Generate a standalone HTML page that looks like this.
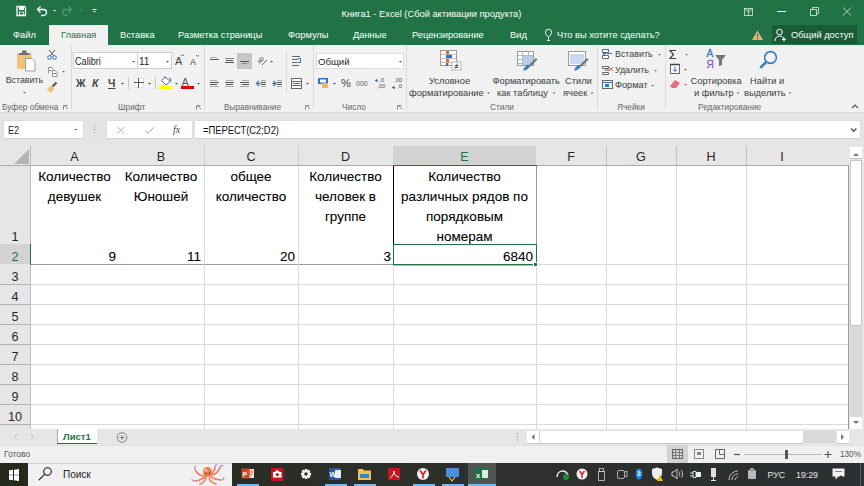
<!DOCTYPE html>
<html><head><meta charset="utf-8">
<style>
*{margin:0;padding:0;box-sizing:border-box}
html,body{width:864px;height:486px;overflow:hidden;background:#fff}
body{position:relative;font-family:"Liberation Sans",sans-serif;color:#000}
.a{position:absolute}
.t{position:absolute;white-space:nowrap;line-height:1}
svg{position:absolute;overflow:visible}
/* title */
#title{left:0;top:0;width:864px;height:45px;background:#217346}
.tab{position:absolute;top:31px;font-size:9.3px;color:#fff;white-space:nowrap;line-height:1}
#ribbon{left:0;top:45px;width:864px;height:67px;background:#f1f1f1}
.rl{position:absolute;font-size:9.3px;color:#3c3c3c;white-space:nowrap;line-height:1}
.gl{position:absolute;top:103px;font-size:8.3px;color:#666;white-space:nowrap;line-height:1}
.sep{position:absolute;top:47px;width:1px;height:63px;background:#dadada}
#band{left:0;top:112px;width:864px;height:34px;background:#e4e4e4}
.box{position:absolute;background:#fff;border-bottom:1px solid #cfcfcf;box-shadow:0 -1px 0 #dcdcdc,1px 0 0 #dcdcdc,-1px 0 0 #dcdcdc}
/* grid */
.hdr{position:absolute;top:146px;height:19px;background:#e6e6e6}
.ch{position:absolute;top:151px;font-size:12.6px;color:#262626;line-height:1;text-align:center}
.rh{position:absolute;left:0;width:30px;font-size:12.6px;color:#262626;line-height:1;text-align:center}
.hl{position:absolute;left:31px;width:817px;height:1px;background:#dadada}
.vl{position:absolute;top:166px;width:1px;height:263px;background:#dadada}
.cell{position:absolute;font-size:13.5px;line-height:20px;color:#000;-webkit-text-stroke:0.08px #000;text-align:center;white-space:nowrap}
.num{position:absolute;top:249.5px;font-size:13.5px;line-height:1;color:#000;-webkit-text-stroke:0.08px #000;white-space:nowrap}
</style></head><body>

<!-- TITLE BAR -->
<div id="title" class="a"></div>
<div class="a" style="left:49px;top:25px;width:59px;height:20px;background:#f1f1f1"></div>
<div class="tab" style="left:13px">Файл</div>
<div class="tab" style="left:61px;color:#217346">Главная</div>
<div class="tab" style="left:120px">Вставка</div>
<div class="tab" style="left:178px">Разметка страницы</div>
<div class="tab" style="left:288px">Формулы</div>
<div class="tab" style="left:353px">Данные</div>
<div class="tab" style="left:412px">Рецензирование</div>
<div class="tab" style="left:510px">Вид</div>
<div class="tab" style="left:557px">Что вы хотите сделать?</div>
<div class="t" style="left:341.5px;top:10px;font-size:9.3px;color:#fff">Книга1 - Excel (Сбой активации продукта)</div>
<div class="a" style="left:772px;top:25px;width:85px;height:19px;background:#1a5c37"></div>
<div class="tab" style="left:791px">Общий доступ</div>

<!-- RIBBON -->
<div id="ribbon" class="a"></div>

<!-- RIBBON CONTENT -->
<!-- clipboard -->
<svg style="left:0;top:0" width="864" height="112">
 <!-- paste -->
 <rect x="17" y="53" width="14.5" height="16" fill="#efc47a"/>
 <rect x="19" y="53" width="10.5" height="2" fill="#707070"/>
 <rect x="22" y="50.5" width="4.5" height="2.5" fill="#707070"/>
 <path d="M25.5 58.5h6.5l3 3v9.5h-9.5z" fill="#fff" stroke="#8a8a8a" stroke-width="0.8"/>
 <path d="M23 92h3l-1.5 1.5z" fill="#666"/>
 <!-- cut -->
 <path d="M49 50l5 6M55 50l-5 6" stroke="#555" stroke-width="1"/>
 <circle cx="49.5" cy="57.5" r="1.8" fill="none" stroke="#2f73c0" stroke-width="1"/>
 <circle cx="54.5" cy="57.5" r="1.8" fill="none" stroke="#2f73c0" stroke-width="1"/>
 <!-- copy -->
 <path d="M48.5 73.5v-6h3l2 2" fill="#fff" stroke="#777" stroke-width="0.8"/>
 <path d="M52.5 76.5v-6h2.5l2 2v4z" fill="#fff" stroke="#777" stroke-width="0.8"/>
 <rect x="49.5" y="70" width="2" height="1" fill="#3b7cc5"/>
 <rect x="53.5" y="73" width="2.5" height="1" fill="#3b7cc5"/>
 <path d="M62 71h3l-1.5 1.5z" fill="#666"/>
 <!-- painter -->
 <path d="M47 89.5l4-4 3.5 3.5-4 4z" fill="#eec27a"/>
 <path d="M52.5 86.5l4-4" stroke="#555" stroke-width="2.2"/>
 <!-- launcher -->
 <path d="M63.5 109.5v-4h4" fill="none" stroke="#888"/><path d="M65 106l3 3" stroke="#888"/>
 <rect x="71" y="46" width="1" height="64" fill="#dadada"/>
 <!-- font group -->
 <rect x="73.5" y="52.5" width="64" height="16" fill="#fff" stroke="#cfcfcf"/>
 <rect x="137.5" y="52.5" width="34" height="16" fill="#fff" stroke="#cfcfcf"/>
 <path d="M132 61h3l-1.5 1.5z" fill="#444"/>
 <path d="M166 61h3l-1.5 1.5z" fill="#444"/>
 <path d="M181 56l1.5-1.5 1.5 1.5" fill="none" stroke="#2f73c0"/>
 <path d="M196 55l1.5 1.5 1.5-1.5" fill="none" stroke="#2f73c0"/>
 <path d="M121 83h3l-1.5 1.5z" fill="#444"/>
 <rect x="128" y="77" width="1" height="12" fill="#c8c8c8"/>
 <path d="M134.5 78.5h9v9h-9z" fill="#fff" stroke="#d0d0d0" stroke-dasharray="1 1"/>
 <path d="M138.5 78v10M134 82.5h10" fill="none" stroke="#555"/>
 <path d="M148 83h3l-1.5 1.5z" fill="#444"/>
 <rect x="155" y="77" width="1" height="12" fill="#c8c8c8"/>
 <path d="M161.5 80.5l4-3.5 4.5 4.5-4 3.5z" fill="#fff" stroke="#555" stroke-width="0.9"/>
 <path d="M164 76.5l1.5 1.5" stroke="#555"/>
 <path d="M169.5 78c1 1 1.5 2 1.2 3.5" fill="none" stroke="#3b7cc5" stroke-width="1.2"/>
 <rect x="159" y="86" width="13" height="3" fill="#ffff00"/>
 <path d="M175 83h3l-1.5 1.5z" fill="#444"/>
 <rect x="181" y="86" width="13" height="3" fill="#e00000"/>
 <path d="M197 83h3l-1.5 1.5z" fill="#444"/>
 <path d="M196.5 109.5v-4h4" fill="none" stroke="#888"/><path d="M198 106l3 3" stroke="#888"/>
 <rect x="204" y="46" width="1" height="64" fill="#dadada"/>
 <!-- alignment -->
 <path d="M210 57.5h7" stroke="#aaa"/><path d="M210 59.5h9" stroke="#555"/>
 <path d="M225 58.5h9" stroke="#888"/><path d="M226 60.5h7M225 62.5h9" stroke="#555"/>
 <rect x="237" y="53" width="15" height="16" fill="#c6c6c6"/>
 <path d="M240 61.5h9" stroke="#555"/><path d="M242 63.5h5" stroke="#888"/>
 <text x="0" y="0" transform="translate(259.5 64) rotate(-45)" font-family="Liberation Sans" font-size="6.5" fill="#444">ab</text>
 <path d="M262 65l5-5" stroke="#555" stroke-width="0.9"/>
 <path d="M270 61h3l-1.5 1.5z" fill="#555"/>
 <path d="M210 80.5h7M210 86.5h9" stroke="#aaa"/><path d="M210 82.5h9M210 84.5h7" stroke="#555"/>
 <path d="M226 80.5h7M225 86.5h9" stroke="#aaa"/><path d="M225 82.5h9M226 84.5h7" stroke="#555"/>
 <path d="M242 80.5h7M240 86.5h9" stroke="#aaa"/><path d="M240 82.5h9M242 84.5h7" stroke="#555"/>
 <path d="M261 80.5h5M261 86.5h5" stroke="#aaa"/><path d="M261 82.5h5M261 84.5h5" stroke="#555"/>
 <path d="M261 83.5h-4M259 81l-2.5 2.5 2.5 2.5" fill="none" stroke="#3a75b8" stroke-width="1.2"/>
 <path d="M277 80.5h5M277 86.5h5" stroke="#aaa"/><path d="M277 82.5h5M277 84.5h5" stroke="#555"/>
 <path d="M272 83.5h4M273.5 81l2.5 2.5-2.5 2.5" fill="none" stroke="#3a75b8" stroke-width="1.2"/>
 <rect x="286" y="51" width="1" height="42" fill="#dadada"/>
 <path d="M292 56.5h8M292 59.5h6M292 62.5h5M292 65.5h7" stroke="#666"/>
 <path d="M298 58.5h2.5v4h-3" fill="none" stroke="#2f73c0"/>
 <rect x="291.5" y="78.5" width="10" height="10" fill="#fff" stroke="#666"/>
 <path d="M291.5 81.5h10M291.5 85.5h10" stroke="#666"/>
 <path d="M293 83.5h7" stroke="#2f73c0"/>
 <path d="M306 83h3l-1.5 1.5z" fill="#444"/>
 <path d="M305.5 109.5v-4h4" fill="none" stroke="#888"/><path d="M307 106l3 3" stroke="#888"/>
 <rect x="313" y="46" width="1" height="64" fill="#dadada"/>
 <!-- number -->
 <rect x="316.5" y="53.5" width="87" height="15" fill="#fff" stroke="#dedede"/>
 <path d="M399 61h3l-1.5 1.5z" fill="#444"/>
 <rect x="318" y="78" width="10" height="6" fill="#2f73c0"/>
 <rect x="320" y="79.5" width="6" height="3" fill="#fff"/>
 <rect x="322" y="83" width="6" height="5" fill="#e3b96a"/>
 <path d="M333 83h3l-1.5 1.5z" fill="#444"/>
 <path d="M375 80.5h3M377.5 79l-2 1.5 2 1.5" fill="none" stroke="#2f73c0"/>
 <path d="M392 87.5h3M393 86l2 1.5-2 1.5" fill="none" stroke="#2f73c0"/>
 <path d="M397.5 109.5v-4h4" fill="none" stroke="#888"/><path d="M399 106l3 3" stroke="#888"/>
 <rect x="406" y="46" width="1" height="64" fill="#dadada"/>
 <!-- styles -->
 <rect x="440.5" y="50.5" width="16" height="15" fill="#fff" stroke="#9a9a9a"/>
 <path d="M440.5 54.5h16M440.5 58.5h16M440.5 62.5h16M448.5 50.5v15" stroke="#bdbdbd"/>
 <rect x="446" y="51" width="3" height="3" fill="#e0643a"/>
 <rect x="446" y="55" width="6" height="3" fill="#2f73c0"/>
 <rect x="446" y="59" width="3" height="3" fill="#e0643a"/>
 <rect x="446" y="63" width="2" height="3" fill="#2f73c0"/>
 <rect x="452" y="62" width="9" height="8" fill="#fff" stroke="#777" stroke-width="0.5"/>
 <path d="M454.5 67.5h4M454.5 65.5h4M457.5 63.5l-2 5" stroke="#333" stroke-width="0.8"/>
 <rect x="517.5" y="51.5" width="16" height="14" fill="#fff" stroke="#9a9a9a"/>
 <path d="M517.5 55.5h16M517.5 59.5h16M517.5 63.5h16M522.5 51.5v14M528.5 51.5v14" stroke="#9ab" stroke-width="0.8"/>
 <rect x="523" y="56" width="10" height="9" fill="#b7cfea"/>
 <path d="M523 70.5c1-3 3-5 5-6l2 2c-1 2-4 4-7 4z" fill="#3b7cc5"/>
 <path d="M529 65l7-7 1.5 1.5-7 7z" fill="#707070"/>
 <rect x="568.5" y="51.5" width="17" height="14" fill="#fff" stroke="#9a9a9a"/>
 <rect x="570" y="54" width="14" height="10" fill="#c6d9ef"/>
 <path d="M574 70.5c1-3 3-5 5-6l2 2c-1 2-4 4-7 4z" fill="#3b7cc5"/>
 <path d="M580 65l7-7 1.5 1.5-7 7z" fill="#707070"/>
 <path d="M487 92.5h3l-1.5 1.5zM552.5 92.5h3l-1.5 1.5zM590.5 92.5h3l-1.5 1.5z" fill="#666"/>
 <rect x="597" y="46" width="1" height="64" fill="#dadada"/>
 <!-- cells -->
 <path d="M602.5 49.5h6v3h-6zM602.5 55.5h6v3h-6z" fill="#fff" stroke="#666"/>
 <path d="M603 53.5h3M605 52l-2 1.5 2 1.5M607 53.5h5" fill="none" stroke="#2f73c0"/>
 <path d="M658 54h3l-1.5 1.5z" fill="#666"/>
 <path d="M602.5 66.5h6v2h-6zM602.5 72.5h6v2h-6z" fill="#fff" stroke="#666"/>
 <path d="M609 67l4 4M613 67l-4 4" stroke="#e0643a"/>
 <rect x="605" y="69" width="4" height="2" fill="#9ab"/>
 <path d="M654 70h3l-1.5 1.5z" fill="#666"/>
 <rect x="602.5" y="80.5" width="10" height="8" fill="#fff" stroke="#666"/>
 <path d="M602.5 82.5h10" stroke="#2f73c0"/>
 <rect x="605" y="84" width="4" height="3" fill="#2f73c0"/>
 <path d="M651 85h3l-1.5 1.5z" fill="#666"/>
 <rect x="665" y="46" width="1" height="64" fill="#dadada"/>
 <!-- editing -->
 <path d="M676 50.5h-6l3.5 4-3.5 4h6" fill="none" stroke="#444" stroke-width="1.2"/>
 <path d="M685 54h3l-1.5 1.5z" fill="#666"/>
 <rect x="670.5" y="64.5" width="9" height="9" fill="#fff" stroke="#666"/>
 <path d="M670.5 64.5h9" stroke="#444" stroke-width="1.5"/>
 <path d="M675 66.5v5M673 69.5l2 2 2-2" fill="none" stroke="#2f73c0"/>
 <path d="M684 69h3l-1.5 1.5z" fill="#666"/>
 <path d="M670 86l5-6 5 3-4 5h-4z" fill="#ea6b84"/>
 <path d="M684 84h3l-1.5 1.5z" fill="#666"/>
 <path d="M715 55h11l-4 5v5l-3 1v-6z" fill="#777"/>
 <circle cx="770.5" cy="57.5" r="5.9" fill="none" stroke="#3b7cc5" stroke-width="1.6"/>
 <path d="M766.3 61.8l-6 6" stroke="#3b7cc5" stroke-width="2.6"/>
 <path d="M736.5 92.5h3l-1.5 1.5zM788.5 92.5h3l-1.5 1.5z" fill="#666"/>
 <path d="M852 108l3-3 3 3" fill="none" stroke="#555" stroke-width="1.2"/>
</svg>
<div class="rl" style="left:5.7px;top:76px;font-size:8.8px">Вставить</div>
<div class="gl" style="left:2px">Буфер обмена</div>
<div class="t" style="left:75px;top:56.5px;font-size:10px;color:#262626;transform:scaleX(0.91);transform-origin:0 0">Calibri</div>
<div class="t" style="left:139px;top:56.5px;font-size:10px;color:#262626">11</div>
<div class="t" style="left:175px;top:56px;font-size:11px;color:#444">A</div>
<div class="t" style="left:190px;top:58px;font-size:9px;color:#444">A</div>
<div class="t" style="left:76px;top:78px;font-size:10.5px;font-weight:bold;color:#444">Ж</div>
<div class="t" style="left:92px;top:78px;font-size:10.5px;font-weight:bold;font-style:italic;color:#444">К</div>
<div class="t" style="left:108px;top:78px;font-size:10.5px;font-weight:bold;color:#444;text-decoration:underline">Ч</div>
<div class="t" style="left:181.5px;top:77px;font-size:11px;color:#555">A</div>
<div class="gl" style="left:118px">Шрифт</div>
<div class="gl" style="left:224px">Выравнивание</div>
<div class="t" style="left:318px;top:57px;font-size:9.6px;color:#262626">Общий</div>
<div class="t" style="left:341px;top:78px;font-size:11px;color:#444">%</div>
<div class="t" style="left:356px;top:80px;font-size:7px;color:#666">000</div>
<div class="t" style="left:379px;top:77px;font-size:6px;color:#555">,0</div>
<div class="t" style="left:377px;top:83px;font-size:6px;color:#555">,00</div>
<div class="t" style="left:394px;top:77px;font-size:6px;color:#555">,00</div>
<div class="t" style="left:397px;top:83px;font-size:6px;color:#555">,0</div>
<div class="gl" style="left:342px">Число</div>
<div class="rl" style="left:429px;top:76.7px">Условное</div>
<div class="rl" style="left:409px;top:89px">форматирование</div>
<div class="rl" style="left:492.5px;top:76.7px">Форматировать</div>
<div class="rl" style="left:497px;top:89px">как таблицу</div>
<div class="rl" style="left:565px;top:76.7px">Стили</div>
<div class="rl" style="left:563px;top:89px">ячеек</div>
<div class="gl" style="left:490px">Стили</div>
<div class="rl" style="left:615px;top:50.3px;font-size:8.9px">Вставить</div>
<div class="rl" style="left:615px;top:66px;font-size:8.9px">Удалить</div>
<div class="rl" style="left:615px;top:80.5px;font-size:9.2px">Формат</div>
<div class="gl" style="left:617px">Ячейки</div>
<div class="t" style="left:706.5px;top:49px;font-size:10.2px;color:#3b7cc5;-webkit-text-stroke:0.3px #3b7cc5">A</div>
<div class="t" style="left:706.5px;top:59.5px;font-size:10px;color:#8e5cb5;-webkit-text-stroke:0.3px #8e5cb5">Я</div>
<div class="rl" style="left:690.6px;top:76.7px">Сортировка</div>
<div class="rl" style="left:694px;top:89px">и фильтр</div>
<div class="rl" style="left:750px;top:76.7px">Найти и</div>
<div class="rl" style="left:744px;top:89px">выделить</div>
<div class="gl" style="left:698px">Редактирование</div>

<!-- FORMULA BAND -->
<div id="band" class="a"></div>
<div class="a" style="left:0;top:112px;width:864px;height:1px;background:#dadada"></div>
<div class="box" style="left:4px;top:121px;width:79px;height:18px"></div>
<div class="t" style="left:7.5px;top:125px;font-size:10.6px;color:#262626;transform:scaleX(0.85);transform-origin:0 0">E2</div>
<div class="box" style="left:107px;top:121px;width:85px;height:18px"></div>
<svg style="left:0;top:0" width="864" height="146">
 <path d="M74.5 129.5h2.5" stroke="#666"/>
 <circle cx="94.5" cy="126" r="0.7" fill="#999"/><circle cx="94.5" cy="129.3" r="0.7" fill="#999"/><circle cx="94.5" cy="132.6" r="0.7" fill="#999"/>
 <path d="M117.5 127l6.5 6.5M124 127l-6.5 6.5" stroke="#a8a8a8" stroke-width="0.9"/>
 <path d="M145.5 130.5l2.8 2.8 5.2-6" fill="none" stroke="#a8a8a8" stroke-width="1"/>
 <text x="173" y="133" font-family="Liberation Serif" font-style="italic" font-size="10" fill="#444">fx</text>
</svg>
<div class="box" style="left:195px;top:121px;width:665px;height:18px"></div>
<svg style="left:0;top:0" width="864" height="146"><path d="M851 128.5l2.7 2.7 2.7-2.7" fill="none" stroke="#555" stroke-width="1.4"/></svg>
<div class="t" style="left:203px;top:125px;font-size:10.6px;color:#111;transform:scaleX(0.885);transform-origin:0 0">=ПЕРЕСТ(C2;D2)</div>

<!-- GRID -->
<div class="a" style="left:0;top:146px;width:864px;height:20px;background:#e6e6e6"></div>
<div class="a" style="left:393px;top:146px;width:143px;height:19px;background:#d2d2d2"></div>
<div class="a" style="left:0;top:165px;width:849px;height:1px;background:#ababab"></div>
<div class="a" style="left:393px;top:165px;width:144px;height:1px;background:#217346"></div>
<div class="a" style="left:0;top:166px;width:30px;height:263px;background:#e6e6e6"></div>
<div class="a" style="left:0;top:244px;width:30px;height:20px;background:#d2d2d2"></div>
<div class="a" style="left:30px;top:146px;width:1px;height:283px;background:#bcbcbc"></div>
<div class="a" style="left:30px;top:244px;width:1px;height:21px;background:#217346"></div>
<div class="a" style="left:848px;top:165px;width:1px;height:264px;background:#9b9b9b"></div>


<!-- select all triangle -->
<svg style="left:0;top:0" width="864" height="486">
 <path d="M14 164L29 149V164z" fill="#b4b4b4"/>
</svg>
<!-- gridlines -->
<div class="hl" style="top:264px;width:362px;background:#9b9b9b"></div>
<div class="hl" style="left:537px;top:264px;width:311px"></div>
<div class="hl" style="top:284px"></div>
<div class="hl" style="top:304px"></div>
<div class="hl" style="top:324px"></div>
<div class="hl" style="top:344px"></div>
<div class="hl" style="top:364px"></div>
<div class="hl" style="top:384px"></div>
<div class="hl" style="top:404px"></div>
<div class="hl" style="top:424px"></div>
<div class="a" style="left:0;top:284px;width:30px;height:1px;background:#b2b2b2"></div>
<div class="a" style="left:0;top:304px;width:30px;height:1px;background:#b2b2b2"></div>
<div class="a" style="left:0;top:324px;width:30px;height:1px;background:#b2b2b2"></div>
<div class="a" style="left:0;top:344px;width:30px;height:1px;background:#b2b2b2"></div>
<div class="a" style="left:0;top:364px;width:30px;height:1px;background:#b2b2b2"></div>
<div class="a" style="left:0;top:384px;width:30px;height:1px;background:#b2b2b2"></div>
<div class="a" style="left:0;top:404px;width:30px;height:1px;background:#b2b2b2"></div>
<div class="a" style="left:0;top:424px;width:30px;height:1px;background:#b2b2b2"></div>
<div class="vl" style="left:204px"></div>
<div class="vl" style="left:298px"></div>
<div class="vl" style="left:606px"></div>
<div class="vl" style="left:676px"></div>
<div class="vl" style="left:746px"></div>
<div class="vl" style="left:393px;top:265px;height:164px"></div>
<div class="vl" style="left:536px;top:265px;height:164px"></div>
<!-- header separators -->
<div class="a" style="left:204px;top:146px;width:1px;height:19px;background:#d0d0d0"></div>
<div class="a" style="left:298px;top:146px;width:1px;height:19px;background:#d0d0d0"></div>
<div class="a" style="left:606px;top:146px;width:1px;height:19px;background:#c0c0c0"></div>
<div class="a" style="left:676px;top:146px;width:1px;height:19px;background:#c0c0c0"></div>
<div class="a" style="left:746px;top:146px;width:1px;height:19px;background:#c0c0c0"></div>
<!-- E1 borders -->
<div class="a" style="left:393px;top:166px;width:1px;height:79px;background:#000"></div>
<div class="a" style="left:536px;top:166px;width:1px;height:78px;background:#9b9b9b"></div>
<!-- E2 selection -->
<div class="a" style="left:393px;top:244px;width:144px;height:21px;border:1px solid #217346"></div>
<div class="a" style="left:394px;top:265px;width:140px;height:1px;background:#9cc3ab"></div>
<div class="a" style="left:533px;top:262px;width:5px;height:5px;background:#217346;border:1px solid #fff"></div>
<!-- col headers -->
<div class="ch" style="left:31px;width:87px">A</div>
<div class="ch" style="left:118px;width:86px">B</div>
<div class="ch" style="left:204px;width:94px">C</div>
<div class="ch" style="left:298px;width:95px">D</div>
<div class="ch" style="left:393px;width:143px;color:#217346">E</div>
<div class="ch" style="left:536px;width:70px">F</div>
<div class="ch" style="left:606px;width:70px">G</div>
<div class="ch" style="left:676px;width:70px">H</div>
<div class="ch" style="left:746px;width:72px">I</div>
<!-- row headers -->
<div class="rh" style="top:231px">1</div>
<div class="rh" style="top:251px;color:#217346">2</div>
<div class="rh" style="top:271px">3</div>
<div class="rh" style="top:291px">4</div>
<div class="rh" style="top:311px">5</div>
<div class="rh" style="top:331px">6</div>
<div class="rh" style="top:351px">7</div>
<div class="rh" style="top:371px">8</div>
<div class="rh" style="top:391px">9</div>
<div class="rh" style="top:411px">10</div>
<!-- cells -->
<div class="cell" style="left:31px;top:166.5px;width:87px">Количество<br>девушек</div>
<div class="cell" style="left:118px;top:166.5px;width:86px">Количество<br>Юношей</div>
<div class="cell" style="left:204px;top:166.5px;width:94px">общее<br>количество</div>
<div class="cell" style="left:298px;top:166.5px;width:95px">Количество<br>человек в<br>группе</div>
<div class="cell" style="left:393px;top:166.5px;width:143px">Количество<br>различных рядов по<br>порядковым<br>номерам</div>
<div class="num" style="right:748px">9</div>
<div class="num" style="right:663px">11</div>
<div class="num" style="right:569px">20</div>
<div class="num" style="right:473px">3</div>
<div class="num" style="right:331px">6840</div>


<!-- TITLE ICONS -->
<svg style="left:0;top:0" width="864" height="45">
 <!-- save -->
 <path d="M17 6.5h7.5l1 1v8h-8.5z" fill="none" stroke="#fff" stroke-width="1.3"/>
 <rect x="19" y="7" width="5" height="3" fill="#fff"/>
 <rect x="19.5" y="12" width="4" height="3" fill="none" stroke="#fff" stroke-width="0.8"/>
 <!-- undo -->
 <path d="M38 9.5h5.5a3 3 0 0 1 0 6H41" fill="none" stroke="#fff" stroke-width="1.3"/>
 <path d="M40.5 6.5l-3 3 3 3" fill="none" stroke="#fff" stroke-width="1.3"/>
 <path d="M53 10h3l-1.5 1.5z" fill="#fff"/>
 <!-- redo -->
 <path d="M71 9.5h-5.5a3 3 0 0 0 0 6H68" fill="none" stroke="#4f9a70" stroke-width="1.3"/>
 <path d="M68.5 6.5l3 3-3 3" fill="none" stroke="#4f9a70" stroke-width="1.3"/>
 <path d="M79.5 10.5h2" stroke="#4f9a70"/>
 <path d="M92.5 9.5h4" stroke="#fff"/><path d="M93 11h3l-1.5 1.5z" fill="#fff"/>
 <!-- ribbon display -->
 <rect x="744.5" y="8.5" width="8" height="7" fill="none" stroke="#dfeae3" stroke-width="0.8"/>
 <path d="M744.5 10h8M748.5 10v5.5M747 12.5l1.5-1.5 1.5 1.5" fill="none" stroke="#dfeae3" stroke-width="0.7"/>
 <!-- minimize -->
 <path d="M777 11.5h9" stroke="#fff"/>
 <!-- restore -->
 <rect x="810.5" y="9.5" width="6" height="6" fill="none" stroke="#dfeae3" stroke-width="0.8"/>
 <path d="M812.5 9.5v-2h6v6h-2" fill="none" stroke="#dfeae3" stroke-width="0.8"/>
 <!-- close -->
 <path d="M843 7.5l8 8M851 7.5l-8 8" stroke="#dfeae3" stroke-width="0.8"/>
 <!-- warning -->
 <path d="M757.5 30.5l5.5 9.5h-11z" fill="#e9b27a"/>
 <rect x="757" y="33.5" width="1.2" height="3.5" fill="#217346"/>
 <rect x="757" y="38" width="1.2" height="1.2" fill="#217346"/>
 <!-- lightbulb -->
 <path d="M548.5 39.5v-2.5c-2-1.2-3-3-3-4.8a3 3 0 0 1 6 0c0 1.8-1 3.6-3 4.8v2.5" fill="none" stroke="#fff" stroke-width="0.9"/>
 <path d="M547 40.5h3" stroke="#fff" stroke-width="0.9"/>
 <!-- share person -->
 <circle cx="779.5" cy="32" r="2.8" fill="none" stroke="#fff" stroke-width="1"/>
 <path d="M775 41c0-3 2-5 4.5-5s4 1.5 4.5 3" fill="none" stroke="#fff" stroke-width="1"/>
 <path d="M782 39.5h4M784 37.5v4" stroke="#fff" stroke-width="1"/>
</svg>

<!-- VERTICAL SCROLLBAR -->
<div class="a" style="left:849px;top:146px;width:15px;height:283px;background:#e6e6e6"></div>
<div class="a" style="left:850px;top:147px;width:12px;height:12px;background:#fff;border-bottom:1px solid #c6c6c6"></div>
<div class="a" style="left:850px;top:160px;width:12px;height:166px;background:#fff;border:1px solid #c6c6c6"></div>
<div class="a" style="left:850px;top:326px;width:12px;height:91px;background:#d9d9d9"></div>
<div class="a" style="left:850px;top:417px;width:12px;height:12px;background:#fff"></div>
<svg style="left:0;top:0" width="864" height="486">
 <path d="M853 156h6l-3-3z" fill="#777"/>
 <path d="M853 421h6l-3 3z" fill="#777"/>
</svg>

<!-- SHEET TAB BAR -->
<div class="a" style="left:0;top:429px;width:864px;height:16px;background:#e6e6e6"></div>

<div class="a" style="left:57px;top:429px;width:40px;height:15px;background:#fff;border-left:1px solid #aaa"></div>
<div class="a" style="left:57px;top:443px;width:40px;height:1px;background:#217346"></div>
<div class="t" style="left:63px;top:432px;font-size:9.5px;font-weight:bold;color:#217346">Лист1</div>
<svg style="left:0;top:0" width="864" height="486">
 <path d="M17 434.5l-2.5 2.5 2.5 2.5" fill="none" stroke="#bbb"/>
 <path d="M31 434.5l2.5 2.5-2.5 2.5" fill="none" stroke="#bbb"/>
 <circle cx="122" cy="437.5" r="4.8" fill="none" stroke="#777" stroke-width="0.9"/>
 <path d="M119.5 437.5h5M122 435v5" stroke="#777" stroke-width="0.9"/>
 <circle cx="517.5" cy="434" r="0.7" fill="#999"/><circle cx="517.5" cy="437" r="0.7" fill="#999"/><circle cx="517.5" cy="440" r="0.7" fill="#999"/>
</svg>
<div class="a" style="left:527px;top:431px;width:12px;height:13px;background:#fff;border-bottom:1px solid #c6c6c6"></div>
<div class="a" style="left:539px;top:431px;width:264px;height:13px;background:#fff;border-bottom:1px solid #c6c6c6;border-left:1px solid #d0d0d0"></div>
<div class="a" style="left:803px;top:431px;width:33px;height:12px;background:#d9d9d9"></div>
<div class="a" style="left:837px;top:431px;width:12px;height:13px;background:#fff;border-bottom:1px solid #c6c6c6"></div>
<svg style="left:0;top:0" width="864" height="486">
 <path d="M534.5 434v6l-3-3z" fill="#777"/>
 <path d="M841 434v6l3-3z" fill="#777"/>
</svg>

<!-- STATUS BAR -->
<div class="a" style="left:0;top:445px;width:864px;height:18px;background:#f0f0f0;border-top:1px solid #e0e0e0"></div>
<div class="t" style="left:4px;top:450px;font-size:8.5px;color:#555">Готово</div>
<div class="a" style="left:667px;top:445px;width:21px;height:18px;background:#d2d2d2"></div>
<svg style="left:0;top:0" width="864" height="486">
 <rect x="672.5" y="449.5" width="10" height="9" fill="none" stroke="#666"/>
 <path d="M672.5 452.5h10M672.5 455.5h10M675.5 449.5v9M679.5 449.5v9" stroke="#666" stroke-width="0.8"/>
 <rect x="694.5" y="449.5" width="9" height="9" fill="none" stroke="#888"/>
 <rect x="697" y="452" width="4" height="3" fill="#888"/>
 <rect x="715.5" y="449.5" width="9" height="9" fill="none" stroke="#666"/>
 <path d="M719.5 449.5v5h5" fill="none" stroke="#666"/>
 <path d="M734 454.5h6" stroke="#555" stroke-width="1.2"/>
 <path d="M744 454.5h78" stroke="#bbb"/>
 <rect x="785" y="450" width="3" height="9" fill="#555"/>
 <path d="M824.5 454.5h7M828 451v7" stroke="#555" stroke-width="1.2"/>
</svg>
<div class="t" style="left:840px;top:450.5px;font-size:8.2px;color:#555">130%</div>

<!-- TASKBAR -->
<div class="a" style="left:0;top:463px;width:864px;height:23px;background:linear-gradient(90deg,#252a1f 0%,#2a2e26 30%,#2d302c 60%,#2b2f32 100%)"></div>
<div class="a" style="left:0;top:463px;width:28px;height:23px;background:#232a1c"></div>
<svg style="left:0;top:0" width="864" height="486">
 <path d="M9 470.3l4-0.5v4.9H9zM14 469.7l5-0.7v5.7H14zM9 475.3h4v4.9l-4-0.5zM14 475.3h5v5.7l-5-0.7z" fill="#fff"/>
</svg>
<div class="a" style="left:28px;top:463px;width:204px;height:23px;background:#f0f0f0;border-top:1px solid #d0d0d0"></div>
<svg style="left:0;top:0" width="864" height="486">
 <circle cx="47.5" cy="471.5" r="3.8" fill="none" stroke="#111" stroke-width="1.1"/>
 <path d="M44.8 474.2l-6 6" stroke="#111" stroke-width="1.1"/>
</svg>
<div class="t" style="left:63px;top:470px;font-size:10px;color:#222">Поиск</div>
<!-- octopus -->
<svg style="left:0;top:0" width="864" height="486">
 <path d="M205 477c-3 2-6 4-10 4M204 476c-4 0-8-3-9-7M206 478c-1 3-3 5-6 6M209 478c1 3 3 5 7 6M211 477c3 2 6 3 10 3M212 475c4-1 7-4 8-8M210 476c2-3 5-5 5-9" fill="none" stroke="#ef7e5e" stroke-width="1.6" stroke-linecap="round"/>
 <path d="M195 469c-1-2 0-3 1-3M220 467c1-2 2-2 3-1M221 480c2 0 3-1 3-3M195 481c-2 0-3-1-3-2M215 467c0-2 1-3 2-2" fill="none" stroke="#b79be0" stroke-width="1.2" stroke-linecap="round"/>
 <ellipse cx="207.5" cy="472" rx="4.5" ry="5" fill="#f07a4f"/>
 <ellipse cx="206" cy="470.5" rx="1.5" ry="1.8" fill="#ffb08f"/>
 <circle cx="206" cy="473.5" r="0.7" fill="#333"/><circle cx="209.5" cy="473" r="0.7" fill="#333"/>
</svg>
<!-- taskbar app icons -->
<svg style="left:0;top:0" width="864" height="486">
 <rect x="247" y="469" width="7" height="9" fill="#fbe3da"/>
 <path d="M249 471h4M249 473h4M249 475h3" stroke="#d24726" stroke-width="0.8"/>
 <rect x="241.5" y="468.5" width="8" height="10" fill="#d24726"/>
 <text x="242.5" y="476.5" font-family="Liberation Sans" font-size="7" font-weight="bold" fill="#fff">P</text>
 <rect x="237" y="484" width="22" height="2" fill="#76b9ed"/>
 <rect x="271" y="468" width="12.5" height="13" rx="1" fill="#c8161d"/>
 <path d="M273 472h2l1-1.5h2.5l1 1.5h2v5.5h-8.5z" fill="#fff"/>
 <circle cx="277.3" cy="474.6" r="1.6" fill="#c8161d"/>
 <path d="M311.07 472.87L311.07 475.13L309.32 475.40L309.34 475.35L310.39 476.79L308.79 478.39L307.35 477.34L307.40 477.32L307.13 479.07L304.87 479.07L304.60 477.32L304.65 477.34L303.21 478.39L301.61 476.79L302.66 475.35L302.68 475.40L300.93 475.13L300.93 472.87L302.68 472.60L302.66 472.65L301.61 471.21L303.21 469.61L304.65 470.66L304.60 470.68L304.87 468.93L307.13 468.93L307.40 470.68L307.35 470.66L308.79 469.61L310.39 471.21L309.34 472.65L309.32 472.60Z" fill="#fff"/>
 <circle cx="306" cy="474" r="1.8" fill="#2a2e26"/>
 <rect x="329" y="468" width="12" height="12" fill="#2b579a"/>
 <rect x="335" y="470" width="6" height="8" fill="#fff" opacity="0.9"/>
 <text x="329.5" y="477" font-family="Liberation Sans" font-size="7" font-weight="bold" fill="#fff">W</text>
 <rect x="325" y="484" width="22" height="2" fill="#76b9ed"/>
 <path d="M358 469h5l1 1.5h7v9.5h-13z" fill="#f0c24b"/>
 <rect x="360" y="474" width="9" height="4" fill="#2b85d8"/>
 <rect x="354" y="484" width="22" height="2" fill="#76b9ed"/>
 <rect x="388" y="468" width="12" height="12" fill="#c4161c"/>
 <path d="M390 478c2-1 4-4 4-7 0 3 2 6 5 6" fill="none" stroke="#fff" stroke-width="1"/>
 <circle cx="423" cy="474" r="6" fill="#f2f2f2"/>
 <path d="M420 470.5l3 4v4M426 470.5l-3 4" fill="none" stroke="#e2161d" stroke-width="1.6"/>
 <rect x="413" y="484" width="22" height="2" fill="#76b9ed"/>
 <rect x="446" y="468" width="13" height="9" fill="#4c8fd6"/>
 <path d="M449 477l3 4 3-4" fill="none" stroke="#e9c23a" stroke-width="1.2"/>
 <rect x="442" y="484" width="22" height="2" fill="#76b9ed"/>
</svg>
<div class="a" style="left:468px;top:463px;width:28px;height:23px;background:#4f5550"></div>
<svg style="left:0;top:0" width="864" height="486">
 <rect x="475" y="468" width="13" height="12" fill="#1e7145"/>
 <rect x="482" y="470" width="6" height="8" fill="#fff" opacity="0.85"/>
 <text x="476" y="477.5" font-family="Liberation Sans" font-size="7.5" font-weight="bold" fill="#fff">x</text>
 <rect x="468" y="484" width="28" height="2" fill="#76b9ed"/>
</svg>
<!-- tray -->
<svg style="left:0;top:0" width="864" height="486">
 <path d="M557 477c0-4 3-6 6-6s4 2 5 4" fill="none" stroke="#eee" stroke-width="1.5"/>
 <circle cx="566" cy="477" r="3" fill="#1e8e3e"/>
 <circle cx="582" cy="474" r="5.5" fill="#f2f2f2"/>
 <path d="M579.5 471l2.5 3.5v3.5M584.5 471l-2.5 3.5" fill="none" stroke="#e2161d" stroke-width="1.4"/>
 <rect x="599.5" y="468.5" width="4" height="3" fill="none" stroke="#ccc" stroke-width="0.8"/>
 <rect x="598.5" y="471.5" width="6" height="9" fill="none" stroke="#ccc" stroke-width="0.8"/>
 <rect x="617.5" y="470.5" width="7" height="8" rx="1.5" fill="none" stroke="#ccc" stroke-width="0.8"/>
 <path d="M625 472l2-1v6l-2-1" fill="none" stroke="#ccc" stroke-width="0.8"/>
 <ellipse cx="639" cy="474" rx="3.3" ry="5.5" fill="#1e88e5"/>
 <path d="M637.5 471.5l3 3-1.5 1.5v-5l1.5 1.5-3 3" fill="none" stroke="#fff" stroke-width="0.8"/>
 <path d="M652 469l5-1.5 5 1.5v4c0 4-3 6-5 7-2-1-5-3-5-7z" fill="#eee"/>
 <path d="M660 475l3 6h-6z" fill="#f5b800"/>
 <path d="M672 472h2l3-3v10l-3-3h-2z" fill="none" stroke="#ddd" stroke-width="0.9"/>
 <path d="M679 471.5c1 1.5 1 3.5 0 5M681 470c2 2 2 6 0 8" fill="none" stroke="#ddd" stroke-width="0.8"/>
 <path d="M690 473h3M690 476h3M693 471.5h3v6h-3z" fill="none" stroke="#eee" stroke-width="0.9"/>
 <rect x="696" y="472" width="5" height="5" fill="#eee"/>
 <rect x="711" y="468" width="5" height="9" fill="#ddd"/>
 <path d="M713.5 477v3M711 480.5h5" stroke="#ddd"/>
 <path d="M729 480c0-5 4-9 9-9M732 480c0-3 2-6 6-6M735 480c0-1.5 1-3 3-3" fill="none" stroke="#ccc" stroke-width="0.9"/>
 <rect x="748" y="470" width="8" height="9" rx="1" fill="#bbb"/>
 <rect x="750" y="468" width="4" height="3" fill="#999"/>
 <path d="M832.5 468.5h12v8h-6l-3 3v-3h-3z" fill="#f2f2f2"/>
 <path d="M835 471.5h7" stroke="#666" stroke-width="0.8"/>
 <circle cx="841" cy="477" r="1.6" fill="#2b2f32"/>
</svg>
<div class="t" style="left:767.5px;top:470.5px;font-size:8.8px;color:#e6e6e6">РУС</div>
<div class="t" style="left:796px;top:470.5px;font-size:8.8px;color:#e6e6e6">19:29</div>
<div class="a" style="left:860px;top:463px;width:1px;height:23px;background:#55595c"></div>

</body></html>
